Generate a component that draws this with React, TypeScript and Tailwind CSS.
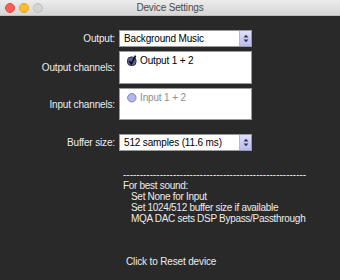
import React from "react";

const font = { fontFamily: '"Liberation Sans", Arial, sans-serif' };

const Stepper = () => (
    <div className="w-[12px] h-full flex items-center justify-center bg-gradient-to-b from-[#e1e1fa] to-[#b8bbee] border-l border-[#b3b5dc]">
        <svg width="6" height="9" viewBox="0 0 6 9">
            <path d="M3 0.8 L5.5 3.6 H0.5 Z" fill="#333350" />
            <path d="M3 8.2 L5.5 5.4 H0.5 Z" fill="#333350" />
        </svg>
    </div>
);

const Select: React.FC<{ value: string }> = ({ value }) => (
    <div className="w-[133px] h-[17px] bg-white border border-[#9a9a9a] flex items-center">
        <span className="flex-1 pl-[4px] text-[10px] text-black leading-none tracking-[-0.15px]">{value}</span>
        <Stepper />
    </div>
);

const Row: React.FC<{ label: string; children: React.ReactNode; className?: string }> = ({
    label,
    children,
    className,
}) => (
    <div className={"flex items-center gap-[4px] " + (className ?? "")}>
        <div className="w-[115px] text-right text-[10px] text-[#ececec] tracking-[-0.15px]">{label}</div>
        {children}
    </div>
);

export default function App() {
    return (
        <div className="w-[340px] h-[280px] bg-[#292929] flex flex-col overflow-hidden" style={font}>
            <div className="h-[16px] shrink-0 relative bg-gradient-to-b from-[#ececec] to-[#d6d6d6] border-b border-[#bdbdbd] flex items-center justify-center">
                <div className="absolute left-[5px] top-[3px] flex gap-[4px]">
                    <div className="w-[10px] h-[10px] rounded-full bg-[#fc5f57] border border-[#e0463f]" />
                    <div className="w-[10px] h-[10px] rounded-full bg-[#fdbc2e] border border-[#dfa024]" />
                    <div className="w-[10px] h-[10px] rounded-full bg-[#d3d3d3] border border-[#c0c0c0]" />
                </div>
                <span className="text-[10px] text-[#4a4a4a] tracking-[-0.15px] leading-none">Device Settings</span>
            </div>

            <div className="flex flex-col pt-[14px]">
                <Row label="Output:">
                    <Select value="Background Music" />
                </Row>
                <Row label="Output channels:" className="mt-[4px]">
                    <div className="w-[133px] h-[33px] bg-white border border-[#9a9a9a] pl-[7px] pt-[3px] flex items-start gap-[3px]">
                        <svg width="10" height="11" viewBox="0 0 10 11">
                            <rect x="0.5" y="2" width="8.5" height="8.5" rx="3.5" fill="#5f6296" stroke="#2c2d48" />
                            <path d="M2.2 6 L4.4 8.8 L8.6 0.6" fill="none" stroke="#0d0d12" strokeWidth="1.7" />
                        </svg>
                        <span className="text-[10px] text-black leading-[12px] tracking-[-0.15px]">Output 1 + 2</span>
                    </div>
                </Row>
                <Row label="Input channels:" className="mt-[4px]">
                    <div className="w-[133px] h-[32px] bg-white border border-[#9a9a9a] pl-[7px] pt-[4px] flex items-start gap-[3px]">
                        <svg width="10" height="10" viewBox="0 0 10 10">
                            <circle cx="4.8" cy="4.8" r="4.2" fill="#b4b7ec" stroke="#7d80b4" />
                        </svg>
                        <span className="text-[10px] text-[#8e8e8e] leading-[10px] tracking-[-0.15px]">Input 1 + 2</span>
                    </div>
                </Row>
                <Row label="Buffer size:" className="mt-[14px]">
                    <Select value="512 samples (11.6 ms)" />
                </Row>
            </div>

            <div className="pl-[123px] mt-[18px] text-[10px] text-[#ececec] leading-[11px] whitespace-pre tracking-[-0.3px]">
                <div className="tracking-[0px]">-------------------------------------------------------</div>
                <div>For best sound:</div>
                <div className="pl-[8px]">Set None for Input</div>
                <div className="pl-[8px]">Set 1024/512 buffer size if available</div>
                <div className="pl-[8px]">MQA DAC sets DSP Bypass/Passthrough</div>
            </div>

            <div className="pl-[126px] mt-[32px] text-[10px] text-[#ececec] leading-[11px] tracking-[-0.15px]">
                Click to Reset device
            </div>
        </div>
    );
}
